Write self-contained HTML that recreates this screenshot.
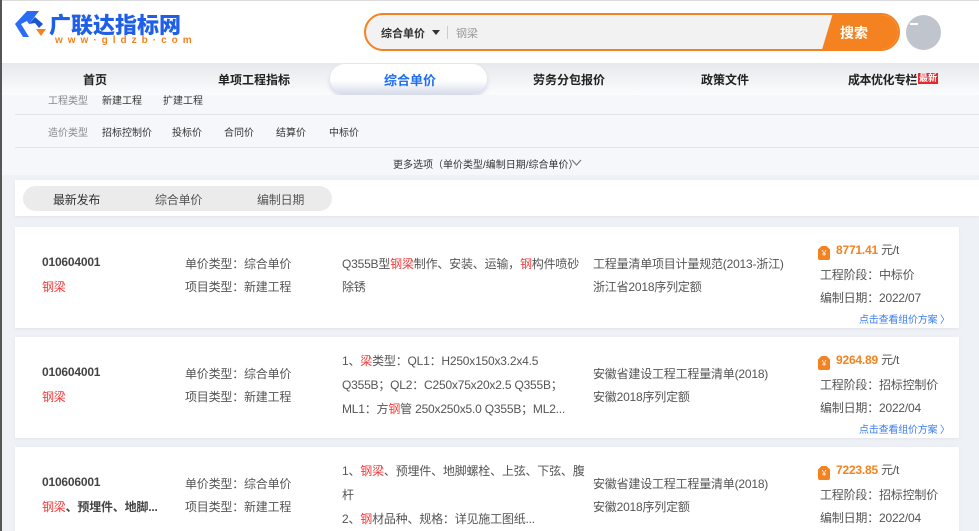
<!DOCTYPE html>
<html style="width:979px;height:531px;overflow:hidden"><head><meta charset="utf-8"><style>
*{margin:0;padding:0;box-sizing:border-box}
body{width:979px;height:531px;overflow:hidden;background:#eef1f5;font-family:"Liberation Sans","Noto Sans CJK SC",sans-serif;position:relative;color:#333}
.abs{position:absolute}
.hdr{left:0;top:0;width:979px;height:63px;background:#fff;border-top:1px solid #ddd}
.nav{left:0;top:63px;width:979px;height:32px;background:linear-gradient(#e6e8ec,#fbfcfd)}
.nav span{position:absolute;top:8px;font-size:12px;font-weight:bold;color:#222}
.filter{left:0;top:95px;width:979px;height:80px;background:#f5f7fa}
.f{font-size:10px;color:#333;position:absolute}
.g{color:#888}
.card{position:absolute;left:15px;width:944px;background:#fff;box-shadow:0 1px 3px rgba(0,0,0,.06);overflow:hidden}
.t{position:absolute;font-size:12px;color:#555;white-space:nowrap;letter-spacing:-0.2px}
.b{font-weight:bold;color:#444}
.r{color:#f03c3c}
.p{color:#f58220;font-weight:bold}
.lk{color:#3a7ef0;font-size:10px}
.tag{display:inline-block;width:12px;height:14px;background:#f58220;border-radius:2px;vertical-align:-2px;margin-right:6px;color:#fff;font-size:8px;text-align:center;line-height:15px;clip-path:polygon(30% 0,70% 0,100% 25%,100% 100%,0 100%,0 25%)}
</style></head><body>
<div class="abs" style="left:0;top:0;width:2px;height:531px;background:#555;z-index:9"></div>
<div class="abs hdr"></div>
<svg class="abs" style="left:15px;top:11px" width="34" height="26" viewBox="0 0 34 26"><path d="M12 0H24L14 13 12 10 6 13 14 26H8L0 13Z" fill="#2a6df4"/><path d="M14 13L20 6 28 13 24 17 20 12Z" fill="#1c55d0"/><path d="M21 18H31L26 25Z" fill="#f58220"/></svg>
<div class="abs" style="left:49px;top:8px;font-size:22px;font-weight:900;color:#1f5fe8">广联达指标网</div>
<div class="abs" style="left:55px;top:35px;font-size:10px;font-weight:bold;color:#f58220;letter-spacing:5px">www·gldzb·com</div>
<div class="abs" style="left:364px;top:13px;width:536px;height:38px;border:2px solid #f58220;border-radius:19px;background:#f2f2f2;overflow:hidden">
<div class="abs" style="left:15px;top:10px;font-size:11px;font-weight:bold;color:#333">综合单价</div>
<div class="abs" style="left:66px;top:15px;border:4px solid transparent;border-top:5px solid #333"></div>
<div class="abs" style="left:81px;top:11px;width:1px;height:13px;background:#ccc"></div>
<div class="abs" style="left:90px;top:10px;font-size:11px;color:#999">钢梁</div>
<div class="abs" style="left:455px;top:-2px;width:90px;height:40px;background:#f58220;clip-path:polygon(12px 0,100% 0,100% 100%,0 100%)"></div>
<div class="abs" style="left:474px;top:8px;font-size:14px;font-weight:bold;color:#fff">搜索</div>
</div>
<div class="abs" style="left:906px;top:15px;width:35px;height:35px;border-radius:50%;background:#c0c4cc"></div>
<div class="abs" style="left:910px;top:23px;width:8px;height:2px;background:#fff"></div>
<div class="abs nav">
<span style="left:83px">首页</span><span style="left:218px">单项工程指标</span>
<div class="abs" style="left:330px;top:1px;width:157px;height:30px;border-radius:15px;background:linear-gradient(#fff 55%,#d6dcea);box-shadow:0 3px 4px rgba(120,140,180,.3)"></div>
<span style="left:384px;color:#1f6ff0;font-size:13px;top:7px">综合单价</span>
<span style="left:533px">劳务分包报价</span><span style="left:701px">政策文件</span><span style="left:848px;letter-spacing:-0.5px">成本优化专栏</span>
<span style="left:918px;top:10px;background:#e8262b;color:#fff;font-size:9px;padding:0 1px;line-height:11px">最新</span>
</div>
<div class="abs filter">
<div class="f g" style="left:48px;top:-3px">工程类型</div><div class="f" style="left:102px;top:-3px">新建工程</div><div class="f" style="left:163px;top:-3px">扩建工程</div>
<div class="abs" style="left:15px;top:19px;width:964px;height:1px;background:#e3e5e8"></div>
<div class="f g" style="left:48px;top:29px">造价类型</div><div class="f" style="left:102px;top:29px">招标控制价</div><div class="f" style="left:172px;top:29px">投标价</div><div class="f" style="left:224px;top:29px">合同价</div><div class="f" style="left:276px;top:29px">结算价</div><div class="f" style="left:329px;top:29px">中标价</div>
<div class="abs" style="left:15px;top:52px;width:964px;height:1px;background:#e3e5e8"></div>
<div class="f" style="left:393px;top:61px">更多选项（单价类型/编制日期/综合单价）</div>
<svg class="abs" style="left:571px;top:64px" width="11" height="8"><path d="M1 1L5.5 6 10 1" stroke="#777" fill="none" stroke-width="1.2"/></svg>
</div>
<div class="card" style="top:180px;height:36px;width:964px">
<div class="abs" style="left:8px;top:6px;width:309px;height:25px;border-radius:13px;background:#ebebeb"></div>
<div class="t" style="left:38px;top:11px;color:#333">最新发布</div><div class="t" style="left:140px;top:11px">综合单价</div><div class="t" style="left:242px;top:11px">编制日期</div>
</div>

<div class="card" style="top:227px;height:101px">
<div class="t b" style="left:27px;top:28px">010604001</div><div class="t r" style="left:27px;top:51px">钢梁</div>
<div class="t" style="left:170px;top:28px">单价类型：综合单价</div><div class="t" style="left:170px;top:51px">项目类型：新建工程</div>
<div class="t" style="left:327px;top:28px">Q355B型<span class="r">钢梁</span>制作、安装、运输，<span class="r">钢</span>构件喷砂</div><div class="t" style="left:327px;top:51px">除锈</div>
<div class="t" style="left:578px;top:28px">工程量清单项目计量规范(2013-浙江)</div><div class="t" style="left:578px;top:51px">浙江省2018序列定额</div>
<div class="t" style="left:803px;top:14px"><span class="tag">¥</span><span class="p">8771.41</span> 元/t</div>
<div class="t" style="left:805px;top:39px">工程阶段：中标价</div><div class="t" style="left:805px;top:62px">编制日期：2022/07</div>
<div class="t lk" style="left:844px;top:84px">点击查看组价方案 〉</div>
</div>

<div class="card" style="top:337px;height:101px">
<div class="t b" style="left:27px;top:28px">010604001</div><div class="t r" style="left:27px;top:51px">钢梁</div>
<div class="t" style="left:170px;top:28px">单价类型：综合单价</div><div class="t" style="left:170px;top:51px">项目类型：新建工程</div>
<div class="t" style="left:327px;top:15px">1、<span class="r">梁</span>类型：QL1：H250x150x3.2x4.5</div><div class="t" style="left:327px;top:39px">Q355B；QL2：C250x75x20x2.5 Q355B；</div><div class="t" style="left:327px;top:63px">ML1：方<span class="r">钢</span>管 250x250x5.0 Q355B；ML2...</div>
<div class="t" style="left:578px;top:28px">安徽省建设工程工程量清单(2018)</div><div class="t" style="left:578px;top:51px">安徽2018序列定额</div>
<div class="t" style="left:803px;top:14px"><span class="tag">¥</span><span class="p">9264.89</span> 元/t</div>
<div class="t" style="left:805px;top:39px">工程阶段：招标控制价</div><div class="t" style="left:805px;top:62px">编制日期：2022/04</div>
<div class="t lk" style="left:844px;top:84px">点击查看组价方案 〉</div>
</div>

<div class="card" style="top:447px;height:84px">
<div class="t b" style="left:27px;top:28px">010606001</div><div class="t b" style="left:27px;top:51px"><span class="r" style="font-weight:normal">钢梁</span>、预埋件、地脚...</div>
<div class="t" style="left:170px;top:28px">单价类型：综合单价</div><div class="t" style="left:170px;top:51px">项目类型：新建工程</div>
<div class="t" style="left:327px;top:15px">1、<span class="r">钢梁</span>、预埋件、地脚螺栓、上弦、下弦、腹</div><div class="t" style="left:327px;top:39px">杆</div><div class="t" style="left:327px;top:63px">2、<span class="r">钢</span>材品种、规格：详见施工图纸...</div>
<div class="t" style="left:578px;top:28px">安徽省建设工程工程量清单(2018)</div><div class="t" style="left:578px;top:51px">安徽2018序列定额</div>
<div class="t" style="left:803px;top:14px"><span class="tag">¥</span><span class="p">7223.85</span> 元/t</div>
<div class="t" style="left:805px;top:39px">工程阶段：招标控制价</div><div class="t" style="left:805px;top:62px">编制日期：2022/04</div>
</div>
</body></html>
